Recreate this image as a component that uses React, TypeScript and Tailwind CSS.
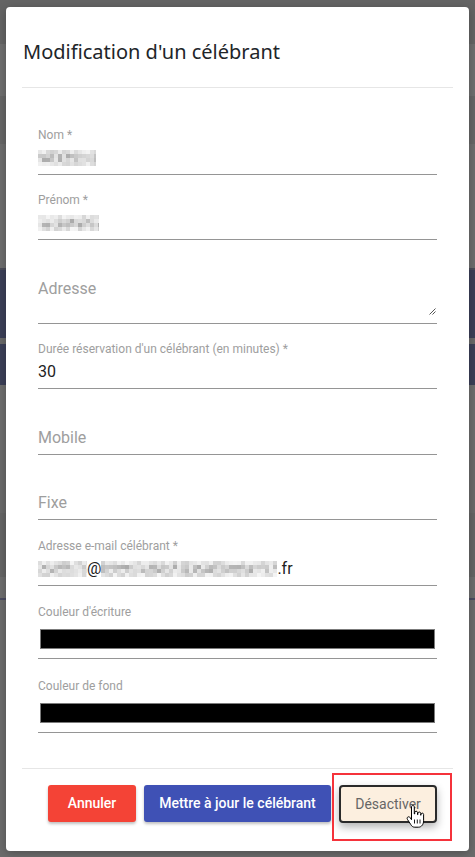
import React from "react";

// backdrop stripes: the page behind the dimmed overlay
const stripes: { h: number; c: string }[] = [
  { h: 44, c: "#646464" },
  { h: 52, c: "#6e6e6e" },
  { h: 48, c: "#666666" },
  { h: 124, c: "#6d6d6d" },
  { h: 2, c: "#4b4c58" },
  { h: 68, c: "#3b3f57" },
  { h: 6, c: "#686868" },
  { h: 41, c: "#3b3f57" },
  { h: 65, c: "#6d6d6d" },
  { h: 63, c: "#696969" },
  { h: 64, c: "#656565" },
  { h: 21, c: "#6d6d6d" },
  { h: 2, c: "#4a4b60" },
  { h: 257, c: "#6b6b6b" },
];

// pixelated (blurred) text, drawn as a grid of grey cells
const Mosaic = ({ w, h, seed }: { w: number; h: number; seed: number }) => {
  const cell = 4;
  const cols = Math.ceil(w / cell);
  const rows = Math.ceil(h / cell);
  const cells = [];
  let s = seed;
  for (let r = 0; r < rows; r++) {
    for (let c = 0; c < cols; c++) {
      s = (s * 9301 + 49297) % 233280;
      const t = s / 233280;
      const edge = r === 0 || r === rows - 1;
      const v = Math.round(edge ? 205 + t * 40 : 170 + t * 70);
      cells.push(
        <rect
          key={`${r}-${c}`}
          x={c * cell}
          y={r * cell}
          width={cell}
          height={cell}
          fill={`rgb(${v},${v},${v})`}
        />
      );
    }
  }
  return (
    <svg width={w} height={h} viewBox={`0 0 ${w} ${h}`} className="block">
      {cells}
    </svg>
  );
};

const labelCls = "h-[14px] text-[12px] leading-[14px] text-[#9e9e9e]";
const rowCls = "h-[32px] flex items-center text-[16px] text-[#222]";

const Field = ({
  label,
  children,
  className = "",
}: {
  label?: string;
  children?: React.ReactNode;
  className?: string;
}) => (
  <div className={`border-b border-[#959595] ${className}`}>
    <div className={labelCls}>{label}</div>
    <div className={rowCls}>{children}</div>
  </div>
);

const ColorField = ({ label, className = "" }: { label: string; className?: string }) => (
  <div className={`border-b border-[#959595] ${className}`}>
    <div className={labelCls}>{label}</div>
    <div className="h-[39px] pt-[10px] px-[2px]">
      <div className="h-[20px] bg-black border border-[#7b7b7b]" />
    </div>
  </div>
);

const HandCursor = () => (
  <svg width="20" height="24" viewBox="0 0 20 24" className="block">
    <path
      d="M6.5 2c0-.8.6-1.5 1.4-1.5S9.3 1.2 9.3 2v7h.4V7.6c0-.8.6-1.4 1.4-1.4s1.4.6 1.4 1.4V9.6h.4V8.4c0-.8.6-1.4 1.4-1.4s1.4.6 1.4 1.4v1.8h.3V9.4c0-.7.6-1.3 1.3-1.3s1.3.6 1.3 1.3v6.4c0 3.4-2 6.4-5.2 6.4h-3.6c-1.9 0-3-1-4-2.6l-3.4-5.3c-.5-.9-.3-1.9.5-2.3.8-.5 1.700-.2 2.2.6l1.4 2.1z"
      fill="#fff"
      stroke="#000"
      strokeWidth="1"
      strokeLinejoin="round"
    />
    <path d="M9.5 14.5v4M12.3 14.5v4M15 14.5v4" stroke="#000" strokeWidth="0.9" />
  </svg>
);

export default function App() {
  return (
    <div className="relative w-[475px] h-[857px] overflow-hidden" style={{ fontFamily: "Roboto, 'Liberation Sans', sans-serif" }}>
      {/* dimmed page behind */}
      <div className="flex flex-col">
        {stripes.map((s, i) => (
          <div key={i} style={{ height: s.h, backgroundColor: s.c }} />
        ))}
      </div>

      {/* modal */}
      <div className="absolute left-[6px] top-[7px] w-[463px] h-[844px] bg-white rounded-[4px] shadow-[0_2px_8px_rgba(0,0,0,0.25)] flex flex-col">
        <div className="mx-4 h-[81px] pt-[33px] border-b border-[#e6e6e6]">
          <h5
            className="pl-[1px] text-[20px] leading-[24px] text-[#212529]"
            style={{ fontFamily: "'Noto Sans', 'Open Sans', sans-serif" }}
          >
            Modification d'un célébrant
          </h5>
        </div>

        <div className="px-[32px] pt-[40px] pb-[35px] w-[463px]">
          <Field label="Nom *">
            <Mosaic w={58} h={16} seed={11} />
          </Field>
          <Field label="Prénom *" className="mt-[18px]">
            <Mosaic w={61} h={16} seed={37} />
          </Field>

          <div className="mt-[17px] border-b border-[#959595]">
            <div className={labelCls} />
            <div className="relative h-[52px] pt-[8px] text-[16px] leading-[20px] text-[#9e9e9e]">
              Adresse
              <svg width="7" height="7" viewBox="0 0 7 7" className="absolute right-[1px] bottom-[8px]">
                <path d="M0.5 6.5L6.5 0.5M3.5 6.5L6.5 3.5" stroke="#555" strokeWidth="1" />
              </svg>
            </div>
          </div>

          <Field label="Durée réservation d'un célébrant (en minutes) *" className="mt-[18px]">
            30
          </Field>
          <Field className="mt-[19px]">
            <span className="text-[#9e9e9e]">Mobile</span>
          </Field>
          <Field className="mt-[18px]">
            <span className="text-[#9e9e9e]">Fixe</span>
          </Field>
          <Field label="Adresse e-mail célébrant *" className="mt-[19px]">
            <Mosaic w={49} h={16} seed={5} />
            <span>@</span>
            <Mosaic w={176} h={16} seed={73} />
            <span>.fr</span>
          </Field>

          <ColorField label="Couleur d'écriture" className="mt-[19px]" />
          <ColorField label="Couleur de fond" className="mt-[20px]" />
        </div>

        <div className="mx-4 border-t border-[#e6e6e6] pt-[16px] pr-4 flex justify-end gap-2">
          <button className="w-[88px] h-[37px] rounded-[3px] bg-[#f44336] text-white text-[14px] font-medium shadow-[0_2px_3px_rgba(0,0,0,0.25)]">
            Annuler
          </button>
          <button className="w-[187px] h-[37px] rounded-[3px] bg-[#3f51b5] text-white text-[14px] font-medium shadow-[0_2px_3px_rgba(0,0,0,0.25)]">
            Mettre à jour le célébrant
          </button>
          <div className="relative">
            <button className="w-[98px] h-[38px] rounded-[4px] bg-[#fcefdf] border-2 border-[#2a2a2a] text-[#666] text-[14px] shadow-[0_4px_8px_rgba(0,0,0,0.3)]">
              Désactiver
            </button>
            {/* highlight frame */}
            <div className="absolute left-[-7px] top-[-12px] w-[120px] h-[68px] border-2 border-[#f5333b] pointer-events-none" />
            <div className="absolute left-[66px] top-[20px]">
              <HandCursor />
            </div>
          </div>
        </div>
      </div>
    </div>
  );
}
